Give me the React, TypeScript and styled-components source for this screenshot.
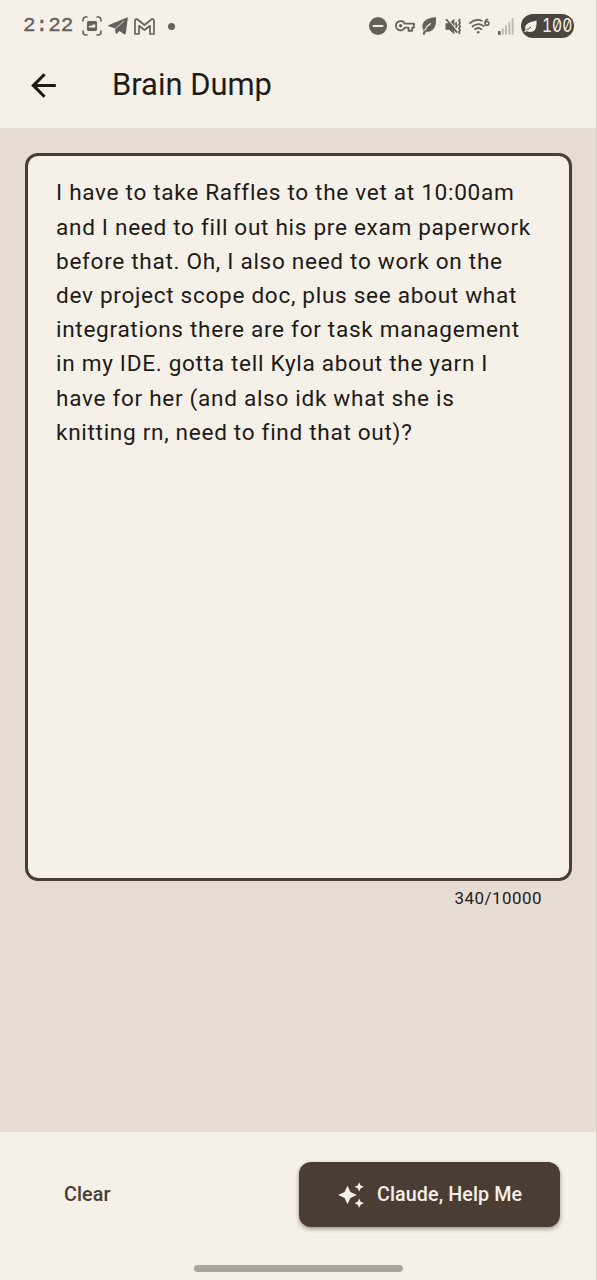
import React from "react";
import styled, { createGlobalStyle } from "styled-components";
import { MdArrowBack } from "react-icons/md";

const ink = "#1d1b17";
const brown = "#4a3d33";
const cream = "#f5f0e8";
const sand = "#e6dcd2";
const status = "#64615c";

const GlobalStyle = createGlobalStyle`
  * { box-sizing: border-box; }
  body { margin: 0; background: ${cream}; font-family: Roboto, "Liberation Sans", sans-serif; }
`;

const Screen = styled.div`
  display: flex;
  flex-direction: column;
  width: 597px;
  height: 1280px;
  overflow: hidden;
  background: ${cream};
  color: ${ink};
  border-right: 1px solid #d6d0c5;
`;

const StatusBar = styled.div`
  display: flex;
  align-items: center;
  justify-content: space-between;
  height: 52px;
  padding: 0 22px 0 23px;
  color: ${status};
  flex: none;
`;

const StatusGroup = styled.div`
  display: flex;
  align-items: center;
`;

const Clock = styled.span`
  width: 51px;
  font: 400 21px/26px "Liberation Mono", monospace;
  -webkit-text-stroke: 0.35px ${status};
`;

const Glyph = styled.svg<{ $gap: number }>`
  display: block;
  flex: none;
  margin-left: ${(p) => p.$gap}px;
`;

const Dot = styled.span`
  width: 7px;
  height: 7px;
  margin-left: 13px;
  border-radius: 50%;
  background: ${status};
`;

const Battery = styled.div`
  display: flex;
  align-items: center;
  width: 53px;
  height: 24px;
  margin-left: 7px;
  border-radius: 12px;
  background: #494641;
  color: ${cream};
`;

const BatteryLevel = styled.span`
  margin-left: 5px;
  font: 400 19px/24px Inter, sans-serif;
  font-feature-settings: "zero" 1, "tnum" 1;
  transform: scaleX(0.82);
  transform-origin: left center;
`;

const TopBar = styled.header`
  display: flex;
  align-items: center;
  flex: none;
  height: 76px;
  padding: 0 25px 10px;
`;

const BackButton = styled.button`
  display: flex;
  width: 37px;
  height: 37px;
  padding: 0;
  border: 0;
  background: none;
  color: ${ink};
`;

const Title = styled.h1`
  margin: 0 0 0 50px;
  font-size: 30.9px;
  font-weight: 400;
  line-height: 40px;
  white-space: nowrap;
`;

const Content = styled.main`
  display: flex;
  flex-direction: column;
  flex: none;
  height: 1004px;
  padding: 25px 24px 0 25px;
  background: ${sand};
`;

const Note = styled.div`
  height: 728px;
  padding: 20.4px 28px;
  border: 3px solid ${brown};
  border-radius: 13px;
  background: ${cream};
  font-size: 22.6px;
  line-height: 34.2px;
  letter-spacing: 0.69px;
  white-space: pre;
`;

const Counter = styled.div`
  padding: 6px 30px 0 0;
  font-size: 16.9px;
  line-height: 23px;
  letter-spacing: 0.5px;
  text-align: right;
`;

const Actions = styled.footer`
  display: flex;
  align-items: center;
  justify-content: space-between;
  height: 124px;
  padding: 1px 36px 0 64px;
  flex: none;
`;

const TextButton = styled.button`
  padding: 0;
  border: 0;
  background: none;
  color: ${brown};
  font: 500 19.7px/28px Roboto, sans-serif;
  letter-spacing: 0.1px;
`;

const FilledButton = styled(TextButton)`
  display: flex;
  align-items: center;
  gap: 12px;
  width: 261px;
  height: 65px;
  padding: 0 37px 0 38px;
  border-radius: 12px;
  background: ${brown};
  color: ${cream};
  white-space: nowrap;
  box-shadow: 0 2px 4px rgba(50, 35, 25, 0.45);
`;

const NavHandle = styled.div`
  flex: none;
  align-self: center;
  width: 209px;
  height: 7px;
  margin-top: 9px;
  border-radius: 4px;
  background: #aca69f;
`;

const lines = [
  "I have to take Raffles to the vet at 10:00am",
  "and I need to fill out his pre exam paperwork",
  "before that. Oh, I also need to work on the",
  "dev project scope doc, plus see about what",
  "integrations there are for task management",
  "in my IDE. gotta tell Kyla about the yarn I",
  "have for her (and also idk what she is",
  "knitting rn, need to find that out)?",
];

const CaptureIcon = () => (
  <Glyph $gap={8} width="20" height="20" viewBox="0 0 20 20" fill="none" stroke="currentColor" strokeWidth="1.6" strokeLinecap="round">
    <path d="M1 5V4q0-3 3-3h1M15 1h1q3 0 3 3v1M19 15v1q0 3-3 3h-1M5 19H4q-3 0-3-3v-1" />
    <path fill="currentColor" stroke="none" fillRule="evenodd" d="M6.500 5h7Q15 5 15 6.500v7q0 1.500-1.500 1.500h-7Q5 15 5 13.500v-7Q5 5 6.500 5ZM6.700 11.600h6.600V8.600h-2.300l-1.700 1.500-1.200-.6-1.400.8Z" />
  </Glyph>
);

const TelegramIcon = () => (
  <Glyph $gap={6} width="20" height="18" viewBox="0 0 20 18" fill="currentColor">
    <path d="M19.400.300Q20 .500 19.800 1.500L17.800 16.500Q17.500 18 16.200 17.200L11.500 14 8.700 16.700Q7.800 17.200 7.600 16L7 11.300 1 9.400Q-.7 8.700.9 7.900Z" />
    <path d="M7.600 11.300L15.800 4.200" stroke={cream} strokeWidth="0.800" />
  </Glyph>
);

const MailIcon = () => (
  <Glyph $gap={6} width="21" height="17" viewBox="0 0 21 17" fill="none" stroke="currentColor" strokeWidth="1.7" strokeLinejoin="round">
    <path d="M1 3Q1 .8 3 1L10.500 7 18 1q2-.2 2 2v13h-4V7.800L10.500 12 5 7.800V16H1Z" />
  </Glyph>
);

const DoNotDisturbIcon = () => (
  <Glyph $gap={0} width="18" height="18" viewBox="0 0 18 18">
    <circle cx="9" cy="9" r="9" fill="currentColor" />
    <path d="M4.500 9h9" stroke={cream} strokeWidth="2" strokeLinecap="round" />
  </Glyph>
);

const KeyIcon = () => (
  <Glyph $gap={8} width="20" height="14" viewBox="0 0 21 14" fill="none" stroke="currentColor" strokeWidth="1.900" strokeLinejoin="round">
    <path d="M10.300 4.600H19.900V8.800H18V12H14.200V8.800H10.300A4.900 4.900 0 1 1 10.300 4.600Z" />
    <circle cx="5.900" cy="6.700" r="1.800" fill="currentColor" stroke="none" />
  </Glyph>
);

const LeafIcon = () => (
  <Glyph $gap={7} width="15" height="18" viewBox="0 0 15 18">
    <path fill="currentColor" d="M13.700 0C6 1 .2 3.600.4 9.700q.1 2.300 1.400 3.800L.6 17.400l2 .4L3.900 14.700C11.500 15.300 15.300 9 13.700 0Z" />
    <path d="M2.500 13.500Q4.300 9.300 8.800 6.300" fill="none" stroke={cream} strokeWidth="1.200" />
  </Glyph>
);

const VibrateIcon = () => (
  <Glyph $gap={8} width="16" height="17" viewBox="0 0 17 18">
    <path fill="currentColor" d="M.5 5.500h4L10 .8v16.400l-5.500-4.700h-4Z" />
    <path d="M2.300.600l12 14" stroke={cream} strokeWidth="1.200" />
    <path d="M1 1l12 14.500" stroke="currentColor" strokeWidth="1.800" />
    <path d="M12.300 4.500l-.9 1.800 1.200 2-1.200 2M16 1l-1.200 2 1.300 2-1.300 2 1.300 2-1.300 2 1.300 2-1.300 2 1 1.800" fill="none" stroke="currentColor" strokeWidth="1.800" />
  </Glyph>
);

const WifiIcon = () => (
  <Glyph $gap={8} width="21" height="17" viewBox="0 0 21 17" fill="none" stroke="currentColor" strokeWidth="1.700" strokeLinecap="round">
    <path d="M1 5.200Q6.500.3 12.800 2.800M3.500 8.500Q9 3.700 14.800 8.200M6 11.300Q9.200 8.700 12.400 11.300" />
    <circle cx="9.200" cy="14.200" r="1.300" fill="currentColor" stroke="none" />
    <path strokeWidth="1.500" d="M18.600 1.300Q16 2.200 16 5" />
    <circle cx="17.900" cy="5.400" r="1.900" strokeWidth="1.500" />
  </Glyph>
);

const SignalIcon = () => (
  <Glyph $gap={8} width="16" height="17" viewBox="0 0 16 17">
    <rect x="0" y="13" width="2.600" height="4" rx="1" fill="currentColor" />
    <path d="M4.700 16V11M8 16V8M11.300 16V4.500M14.600 16V1" stroke="#bdb8b0" strokeWidth="1.900" strokeLinecap="round" />
  </Glyph>
);

const BatteryLeafIcon = () => (
  <Glyph $gap={3} width="13" height="13" viewBox="0 0 13 13">
    <path fill="currentColor" d="M12.500.5Q13.300 12 6 12q-2 0-3.300-1L1 12.500l-.8-1 1.400-1.300C-.5 3.500 5.500 2.500 12.500.5Z" />
    <path d="M2.700 9.800Q5 9 7 7" fill="none" stroke="#494641" strokeWidth="1" />
  </Glyph>
);

const SparklesIcon = () => (
  <svg width="28" height="28" viewBox="0 0 24 24" fill="currentColor">
    <path d="m19 9 1.250-2.750L23 5l-2.750-1.250L19 1l-1.250 2.750L15 5l2.750 1.250L19 9Zm-7.500.500L9 4 6.500 9.500 1 12l5.500 2.500L9 20l2.500-5.500L17 12l-5.500-2.500ZM19 15l-1.250 2.750L15 19l2.750 1.250L19 23l1.250-2.750L23 19l-2.750-1.250L19 15Z" />
  </svg>
);

export default function App() {
  return (
    <>
      <GlobalStyle />
      <Screen>
        <StatusBar>
          <StatusGroup>
            <Clock>2:22</Clock>
            <CaptureIcon />
            <TelegramIcon />
            <MailIcon />
            <Dot />
          </StatusGroup>
          <StatusGroup>
            <DoNotDisturbIcon />
            <KeyIcon />
            <LeafIcon />
            <VibrateIcon />
            <WifiIcon />
            <SignalIcon />
            <Battery>
              <BatteryLeafIcon />
              <BatteryLevel>100</BatteryLevel>
            </Battery>
          </StatusGroup>
        </StatusBar>
        <TopBar>
          <BackButton aria-label="Back">
            <MdArrowBack size={37} />
          </BackButton>
          <Title>Brain Dump</Title>
        </TopBar>
        <Content>
          <Note>{lines.join("\n")}</Note>
          <Counter>340/10000</Counter>
        </Content>
        <Actions>
          <TextButton>Clear</TextButton>
          <FilledButton>
            <SparklesIcon />
            Claude, Help Me
          </FilledButton>
        </Actions>
        <NavHandle />
      </Screen>
    </>
  );
}
